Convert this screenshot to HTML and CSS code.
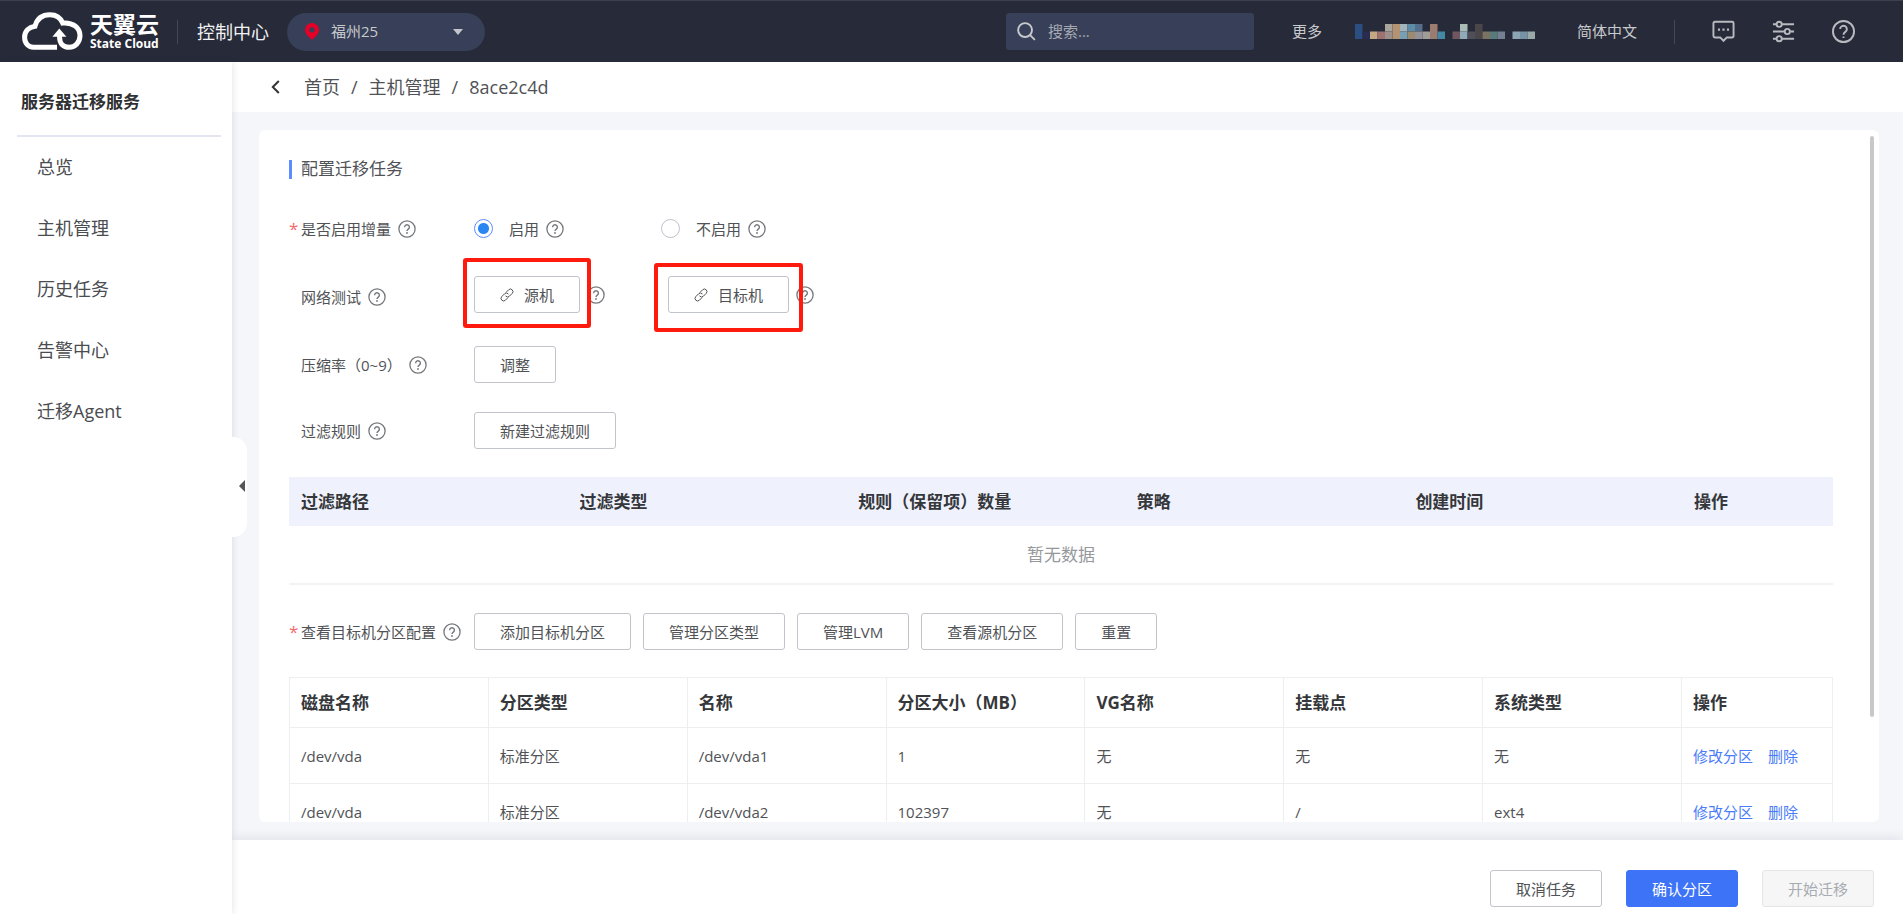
FILE: index.html
```html
<!DOCTYPE html>
<html lang="zh-CN">
<head>
<meta charset="utf-8">
<meta name="viewport" content="width=device-width, initial-scale=1">
<title>服务器迁移服务 - 配置迁移任务</title>
<link rel="stylesheet" href="styles.css">
</head>
<body>
<svg class="sprite" aria-hidden="true">
  <symbol id="i-help" viewBox="0 0 18 18">
    <circle cx="9" cy="9" r="8.1" fill="none" stroke="currentColor" stroke-width="1.3"/>
    <path d="M6.6 7.2a2.4 2.4 0 1 1 3.7 2c-.9.6-1.3 1-1.3 1.9" fill="none" stroke="currentColor" stroke-width="1.4"/>
    <circle cx="9" cy="13" r=".9" fill="currentColor"/>
  </symbol>
  <symbol id="i-link" viewBox="0 0 14 14">
    <g fill="none" stroke="currentColor" stroke-width="1" stroke-linecap="round">
      <path d="M6.2 4.2 8.6 1.8a2.5 2.5 0 0 1 3.6 3.6L9.4 8.2a2.5 2.5 0 0 1-3.6 0"/>
      <path d="M7.8 9.8 5.4 12.2a2.5 2.5 0 0 1-3.6-3.6L4.6 5.8a2.5 2.5 0 0 1 3.6 0"/>
    </g>
  </symbol>
</svg>

<header class="topbar">
  <a class="logo" href="#" aria-label="天翼云 State Cloud">
    <svg class="logo-mark" viewBox="0 0 61 39" aria-hidden="true">
      <path d="M35 35.2H11.5C6 35.2 2.6 31 2.6 25.200c0-6.200 4.200-10 10.400-11C15 6.500 20.500 2.700 28 2.700c6 0 10.500 3 12.700 8.300C51 10 58 15.800 58 23.600c0 6.800-4.800 11.700-10.800 11.700-5.800 0-9.600-3.800-9.600-9.800v-3" fill="none" stroke="#fff" stroke-width="5"/>
      <path d="M37.300 16.600 30.400 24.800H44.400z" fill="#fff"/>
    </svg>
    <span class="logo-text"><span class="logo-cn">天翼云</span><span class="logo-en">State Cloud</span></span>
  </a>
  <span class="divider"></span>
  <a class="console" href="#">控制中心</a>
  <div class="region">
    <svg class="pin" viewBox="0 0 14 17" aria-hidden="true"><path fill="#e60027" fill-rule="evenodd" d="M7 0a7 7 0 0 0-7 7c0 4 4 7 7 10 3-3 7-6 7-10a7 7 0 0 0-7-7zm0 4.200a2.600 2.600 0 1 1 0 5.200 2.600 2.600 0 0 1 0-5.200z"/></svg>
    <select aria-label="区域"><option>福州25</option></select>
    <svg class="caret" viewBox="0 0 10 6" aria-hidden="true"><path d="M0 0h10L5 6z" fill="#c4c6cc"/></svg>
  </div>
  <label class="search">
    <svg viewBox="0 0 20 20" aria-hidden="true"><circle cx="8.500" cy="8.500" r="7.300"/><path d="m13.800 13.800 5 5"/></svg>
    <input type="search" placeholder="搜索..." aria-label="搜索">
  </label>
  <a class="more" href="#">更多</a>
  <svg class="account" viewBox="0 0 24 2" preserveAspectRatio="none" role="img" aria-label="账号">
    <path fill="#2a4f80" d="M0 0h1v2H0z"/><path fill="#272c50" d="M1 1h1v1H1z"/><path fill="#c4a882" d="M2 1h1v1H2z"/><path fill="#9e7270" d="M3 1h1v1H3z"/>
    <path fill="#a8a59c" d="M4 0h1v1H4z"/><path fill="#9c8f8c" d="M4 1h1v1H4z"/><path fill="#b39372" d="M5 0h1v2H5z"/><path fill="#a3b5bb" d="M6 0h1v1H6z"/><path fill="#78a0b5" d="M6 1h1v1H6z"/>
    <path fill="#5c8ca6" d="M7 0h1v1H7z"/><path fill="#9c8b70" d="M7 1h1v1H7z"/><path fill="#546e8c" d="M8 0h1v1H8z"/><path fill="#939299" d="M8 1h1v1H8z"/><path fill="#a09c96" d="M9 1h1v1H9z"/>
    <path fill="#9c7c70" d="M10 0h1v2h-1z"/><path fill="#4488a6" d="M11 1h1v1h-1z"/><path fill="#70565f" d="M13 1h1v1h-1z"/><path fill="#a8bcb5" d="M14 0h1v1h-1z"/><path fill="#8fabb8" d="M14 1h1v1h-1z"/>
    <path fill="#4f4f5a" d="M15 1h1v1h-1z"/><path fill="#4a464a" d="M16 0h1v2h-1z"/><path fill="#7a7263" d="M17 1h1v1h-1z"/><path fill="#587a7a" d="M18 1h1v1h-1z"/><path fill="#747f91" d="M19 1h1v1h-1z"/>
    <path fill="#8ca5b5" d="M21 1h1v1h-1z"/><path fill="#7593a5" d="M22 1h1v1h-1z"/><path fill="#9aa8a8" d="M23 1h1v1h-1z"/>
  </svg>
  <a class="lang" href="#">简体中文</a>
  <span class="divider"></span>
  <button class="tool" type="button" aria-label="消息">
    <svg viewBox="0 0 24 24"><path d="M3 1.800h18a1.500 1.500 0 0 1 1.500 1.500v13.400a1.500 1.500 0 0 1-1.500 1.500h-5.500L12 21.700l-3.500-3.500H3a1.500 1.500 0 0 1-1.500-1.500V3.300A1.500 1.500 0 0 1 3 1.800z"/><path d="M6.200 10h2.200M10.900 10h2.200M15.600 10h2.200" stroke-width="2.400"/></svg>
  </button>
  <button class="tool" type="button" aria-label="设置">
    <svg viewBox="0 0 24 24"><path d="M1 4.500h3.500M10.500 4.500H23M1 12h12M19 12h4M1 19.500h3.500M10.500 19.500H23"/><circle cx="7.500" cy="4.500" r="2.700"/><circle cx="16" cy="12" r="2.700"/><circle cx="7.500" cy="19.500" r="2.700"/></svg>
  </button>
  <button class="tool" type="button" aria-label="帮助">
    <svg viewBox="0 0 24 24"><circle cx="12" cy="12" r="11"/><path d="M8.500 9.500a3.500 3.500 0 1 1 5.400 2.900c-1.300.9-1.900 1.500-1.900 2.900"/><path d="M12 17.200v1.600"/></svg>
  </button>
</header>

<div class="shell">
  <nav class="sidebar" aria-label="服务导航">
    <h1>服务器迁移服务</h1>
    <ul>
      <li><a href="#">总览</a></li>
      <li><a href="#">主机管理</a></li>
      <li><a href="#">历史任务</a></li>
      <li><a href="#">告警中心</a></li>
      <li><a href="#">迁移Agent</a></li>
    </ul>
    <button class="collapse" type="button" aria-label="收起导航"><svg viewBox="0 0 6 12"><path d="M6 0v12L0 6z" fill="#555"/></svg></button>
  </nav>

  <div class="page">
    <nav class="crumbs" aria-label="面包屑">
      <a class="back" href="#" aria-label="返回"><svg viewBox="0 0 9 14"><path d="M7.800 1 1.800 7l6 6" fill="none" stroke="#333" stroke-width="2"/></svg></a>
      <a href="#">首页</a><span class="slash">/</span><a href="#">主机管理</a><span class="slash">/</span><span>8ace2c4d</span>
    </nav>

    <main class="card">
      <div class="card-body">
        <h2>配置迁移任务</h2>

        <div class="form">
          <div class="row">
            <div class="label"><i>*</i>是否启用增量<svg class="help"><use href="#i-help"/></svg></div>
            <div class="radios">
              <label><input type="radio" name="inc" checked><span>启用</span><svg class="help"><use href="#i-help"/></svg></label>
              <label><input type="radio" name="inc"><span>不启用</span><svg class="help"><use href="#i-help"/></svg></label>
            </div>
          </div>
          <div class="row row-test">
            <div class="label">网络测试<svg class="help"><use href="#i-help"/></svg></div>
            <div class="tests">
              <div class="test"><button class="btn" type="button"><svg class="link"><use href="#i-link"/></svg>源机</button><svg class="help"><use href="#i-help"/></svg><span class="mark mark-source"></span></div>
              <div class="test"><button class="btn" type="button"><svg class="link"><use href="#i-link"/></svg>目标机</button><svg class="help"><use href="#i-help"/></svg><span class="mark mark-target"></span></div>
            </div>
          </div>
          <div class="row">
            <div class="label">压缩率（0~9）<svg class="help"><use href="#i-help"/></svg></div>
            <button class="btn" type="button">调整</button>
          </div>
          <div class="row">
            <div class="label">过滤规则<svg class="help"><use href="#i-help"/></svg></div>
            <button class="btn" type="button">新建过滤规则</button>
          </div>
        </div>

        <table class="filters">
          <colgroup><col><col><col><col><col><col class="col-action"></colgroup>
          <thead><tr><th>过滤路径</th><th>过滤类型</th><th>规则（保留项）数量</th><th>策略</th><th>创建时间</th><th>操作</th></tr></thead>
          <tbody><tr><td colspan="6">暂无数据</td></tr></tbody>
        </table>

        <div class="row row-parts">
          <div class="label"><i>*</i>查看目标机分区配置<svg class="help"><use href="#i-help"/></svg></div>
          <div class="actions">
            <button class="btn" type="button">添加目标机分区</button>
            <button class="btn" type="button">管理分区类型</button>
            <button class="btn" type="button">管理LVM</button>
            <button class="btn" type="button">查看源机分区</button>
            <button class="btn" type="button">重置</button>
          </div>
        </div>

        <table class="parts">
          <colgroup><col><col><col><col><col><col><col><col class="col-action"></colgroup>
          <thead><tr><th>磁盘名称</th><th>分区类型</th><th>名称</th><th>分区大小（MB）</th><th>VG名称</th><th>挂载点</th><th>系统类型</th><th>操作</th></tr></thead>
          <tbody>
            <tr><td>/dev/vda</td><td>标准分区</td><td>/dev/vda1</td><td>1</td><td>无</td><td>无</td><td>无</td><td><a href="#">修改分区</a><a href="#">删除</a></td></tr>
            <tr><td>/dev/vda</td><td>标准分区</td><td>/dev/vda2</td><td>102397</td><td>无</td><td>/</td><td>ext4</td><td><a href="#">修改分区</a><a href="#">删除</a></td></tr>
          </tbody>
        </table>
      </div>
      <span class="thumb"></span>
    </main>

    <footer class="footer">
      <button class="btn" type="button">取消任务</button>
      <button class="btn btn-primary" type="button">确认分区</button>
      <button class="btn" type="button" disabled>开始迁移</button>
    </footer>
  </div>
</div>
</body>
</html>
```

FILE: styles.css
```css
* { box-sizing: border-box; }

body {
  margin: 0;
  height: 100vh;
  display: flex;
  flex-direction: column;
  overflow: hidden;
  font: 15px/22px "Open Sans", "Noto Sans", "Noto Sans CJK SC", sans-serif;
  color: #505256;
  background: #f4f6f9;
}

a { color: inherit; text-decoration: none; }
button, input, select { font: inherit; color: inherit; }
h1, h2, ul { margin: 0; padding: 0; }
ul { list-style: none; }
svg { display: block; flex: none; }
.sprite { position: absolute; width: 0; height: 0; }

/* Top bar */
.topbar {
  flex: none;
  display: flex;
  align-items: center;
  height: 62px;
  padding: 0 48px 0 22px;
  background: #272a38;
  border-top: 1px solid #3c4050;
  color: #c8c9cd;
}
.logo { display: flex; align-items: center; gap: 7px; color: #fff; }
.logo-mark { width: 61px; height: 39px; }
.logo-text {
  display: flex;
  flex-direction: column;
  width: 69px;
  white-space: nowrap;
  font-weight: 700;
}
.logo-cn { font-family: "Liberation Sans", "Noto Sans CJK SC", sans-serif; font-size: 23px; line-height: 24px; }
.logo-en { font-size: 12px; line-height: 14px; }
.divider { width: 1px; height: 24px; background: #454857; }
.topbar .logo + .divider { margin-left: 18px; }
.console { margin-left: 19px; font-size: 18px; color: #f2f2f4; }
.region {
  display: flex;
  align-items: center;
  width: 198px;
  height: 38px;
  margin-left: 18px;
  padding: 0 22px 0 18px;
  border-radius: 19px;
  background: #374058;
}
.pin { width: 14px; height: 17px; margin-right: 8px; }
.region select {
  flex: 1;
  min-width: 0;
  padding: 0 4px 2px;
  border: 0;
  background: none;
  appearance: none;
}
.caret { width: 10px; height: 6px; }
.search {
  display: flex;
  align-items: center;
  gap: 12px;
  width: 248px;
  height: 37px;
  margin-left: auto;
  padding: 0 11px;
  border-radius: 3px;
  background: #374058;
}
.search svg { width: 19px; height: 19px; fill: none; stroke: #c8c9cd; stroke-width: 2; }
.search input { flex: 1; min-width: 0; padding: 0 0 2px; border: 0; outline: 0; background: none; }
.search input::placeholder { color: #a6a9b2; opacity: 1; }
.more, .lang { padding-bottom: 2px; }
.more { margin-left: 38px; }
.account { width: 180px; height: 15px; margin-left: 33px; }
.lang { margin: 0 37px 0 42px; }
.tool { margin-left: 37px; padding: 0; border: 0; background: none; color: #b9bac0; }
.tool svg { width: 23px; height: 23px; fill: none; stroke: currentColor; stroke-width: 2; }

/* Sidebar */
.shell { flex: 1; min-height: 0; display: flex; }
.sidebar {
  position: relative;
  z-index: 2;
  flex: none;
  width: 232px;
  padding: 24px 11px 0 17px;
  background: #fff;
  box-shadow: 1px 0 6px rgba(40, 60, 110, .12);
}
.sidebar h1 {
  padding: 0 4px 17px;
  border-bottom: 2px solid #e3e6f0;
  font-size: 17px;
  line-height: 32px;
  color: #303133;
}
.sidebar li a {
  display: block;
  padding: 0 20px;
  font-size: 18px;
  line-height: 61px;
  color: #4a4c50;
}
.collapse {
  position: absolute;
  left: 100%;
  top: 375px;
  width: 15px;
  height: 100px;
  padding: 0 2px 2px 7px;
  border: 0;
  border-radius: 0 14px 14px 0;
  background: #fff;
}
.collapse svg { width: 6px; height: 12px; }

/* Page */
.page { flex: 1; min-width: 0; display: flex; flex-direction: column; }
.crumbs {
  flex: none;
  display: flex;
  align-items: center;
  height: 50px;
  padding: 0 39px;
  background: #fff;
  font-size: 18px;
  line-height: 24px;
}
.back { margin-right: 24px; }
.back svg { width: 9px; height: 14px; }
.slash { margin: 0 11px; }

.card {
  position: relative;
  flex: 1;
  min-height: 0;
  margin: 18px 24px 18px 27px;
  border-radius: 6px;
  background: #fff;
  overflow: hidden;
}
.card-body { height: 100%; padding: 24px 46px 0 30px; overflow: hidden; }
.thumb {
  position: absolute;
  top: 6px;
  right: 5px;
  width: 4px;
  height: 84%;
  border-radius: 2px;
  background: #c8c8c9;
}
.card h2 {
  display: flex;
  align-items: center;
  font-size: 17px;
  line-height: 30px;
  font-weight: 400;
}
.card h2::before {
  content: "";
  width: 3px;
  height: 19px;
  margin-right: 9px;
  background: #5c8cff;
}

.form { display: grid; gap: 29px; margin-top: 26px; }
.row { display: flex; align-items: center; min-height: 37px; }
.row-test { min-height: 41px; }
.label {
  position: relative;
  flex: none;
  display: flex;
  align-items: center;
  width: 185px;
  padding-left: 12px;
}
.label i { position: absolute; left: 0; font-size: 17px; font-style: normal; color: #f56c6c; }
.help { width: 18px; height: 18px; margin-left: 7px; color: #75777b; }

.radios { display: flex; gap: 97px; }
.radios label { display: flex; align-items: center; }
.radios span { margin-left: 16px; }
.radios input {
  appearance: none;
  width: 19px;
  height: 19px;
  margin: 0;
  border: 1px solid #bfc2cc;
  border-radius: 50%;
  background: #fff;
}
.radios input:checked {
  border-color: #5c8cff;
  background: radial-gradient(circle, #2a86f0 5px, #fff 6px);
}

.btn {
  display: inline-flex;
  align-items: center;
  justify-content: center;
  height: 37px;
  padding: 0 25px;
  border: 1px solid #c2c4cc;
  border-radius: 3px;
  background: #fff;
  white-space: nowrap;
}
.btn-primary { border-color: #3c73f7; background: #3c73f7; color: #fff; }
.btn:disabled { border-color: #e4e5e9; background: #f6f6f7; color: #a8abb2; }
.link { width: 14px; height: 14px; margin-right: 10px; }

.tests { display: flex; gap: 63px; align-self: flex-start; }
.test { position: relative; display: flex; align-items: center; }
.mark { position: absolute; border: 4px solid #fe1b0d; border-radius: 3px; pointer-events: none; }
.mark-source { inset: -18px 14px -15px -11px; }
.mark-target { inset: -13px 11px -19px -14px; }

/* Tables */
table { width: 100%; border-collapse: collapse; table-layout: fixed; }
.col-action { width: 151px; }
th, td { padding: 0 12px; text-align: left; }
th { font-size: 17px; color: #35373b; }

.filters { margin-top: 28px; }
.filters th { height: 49px; background: #eff2fc; }
.filters td {
  height: 58px;
  border-bottom: 2px solid #f2f3f5;
  font-size: 17px;
  text-align: center;
  color: #96989c;
}

.row-parts { margin-top: 28px; }
.actions { display: flex; gap: 12px; }

.parts { margin-top: 27px; }
.parts th, .parts td { padding: 0 11px; border: 1px solid #eceeef; }
.parts th { height: 50px; }
.parts td { height: 56px; }
.parts a { color: #4a7cf8; }
.parts a + a { margin-left: 15px; }

/* Footer */
.footer {
  flex: none;
  display: flex;
  justify-content: flex-end;
  gap: 24px;
  padding: 30px 29px 7px;
  background: #fff;
  box-shadow: 0 -2px 10px rgba(40, 50, 90, .1);
}
```
